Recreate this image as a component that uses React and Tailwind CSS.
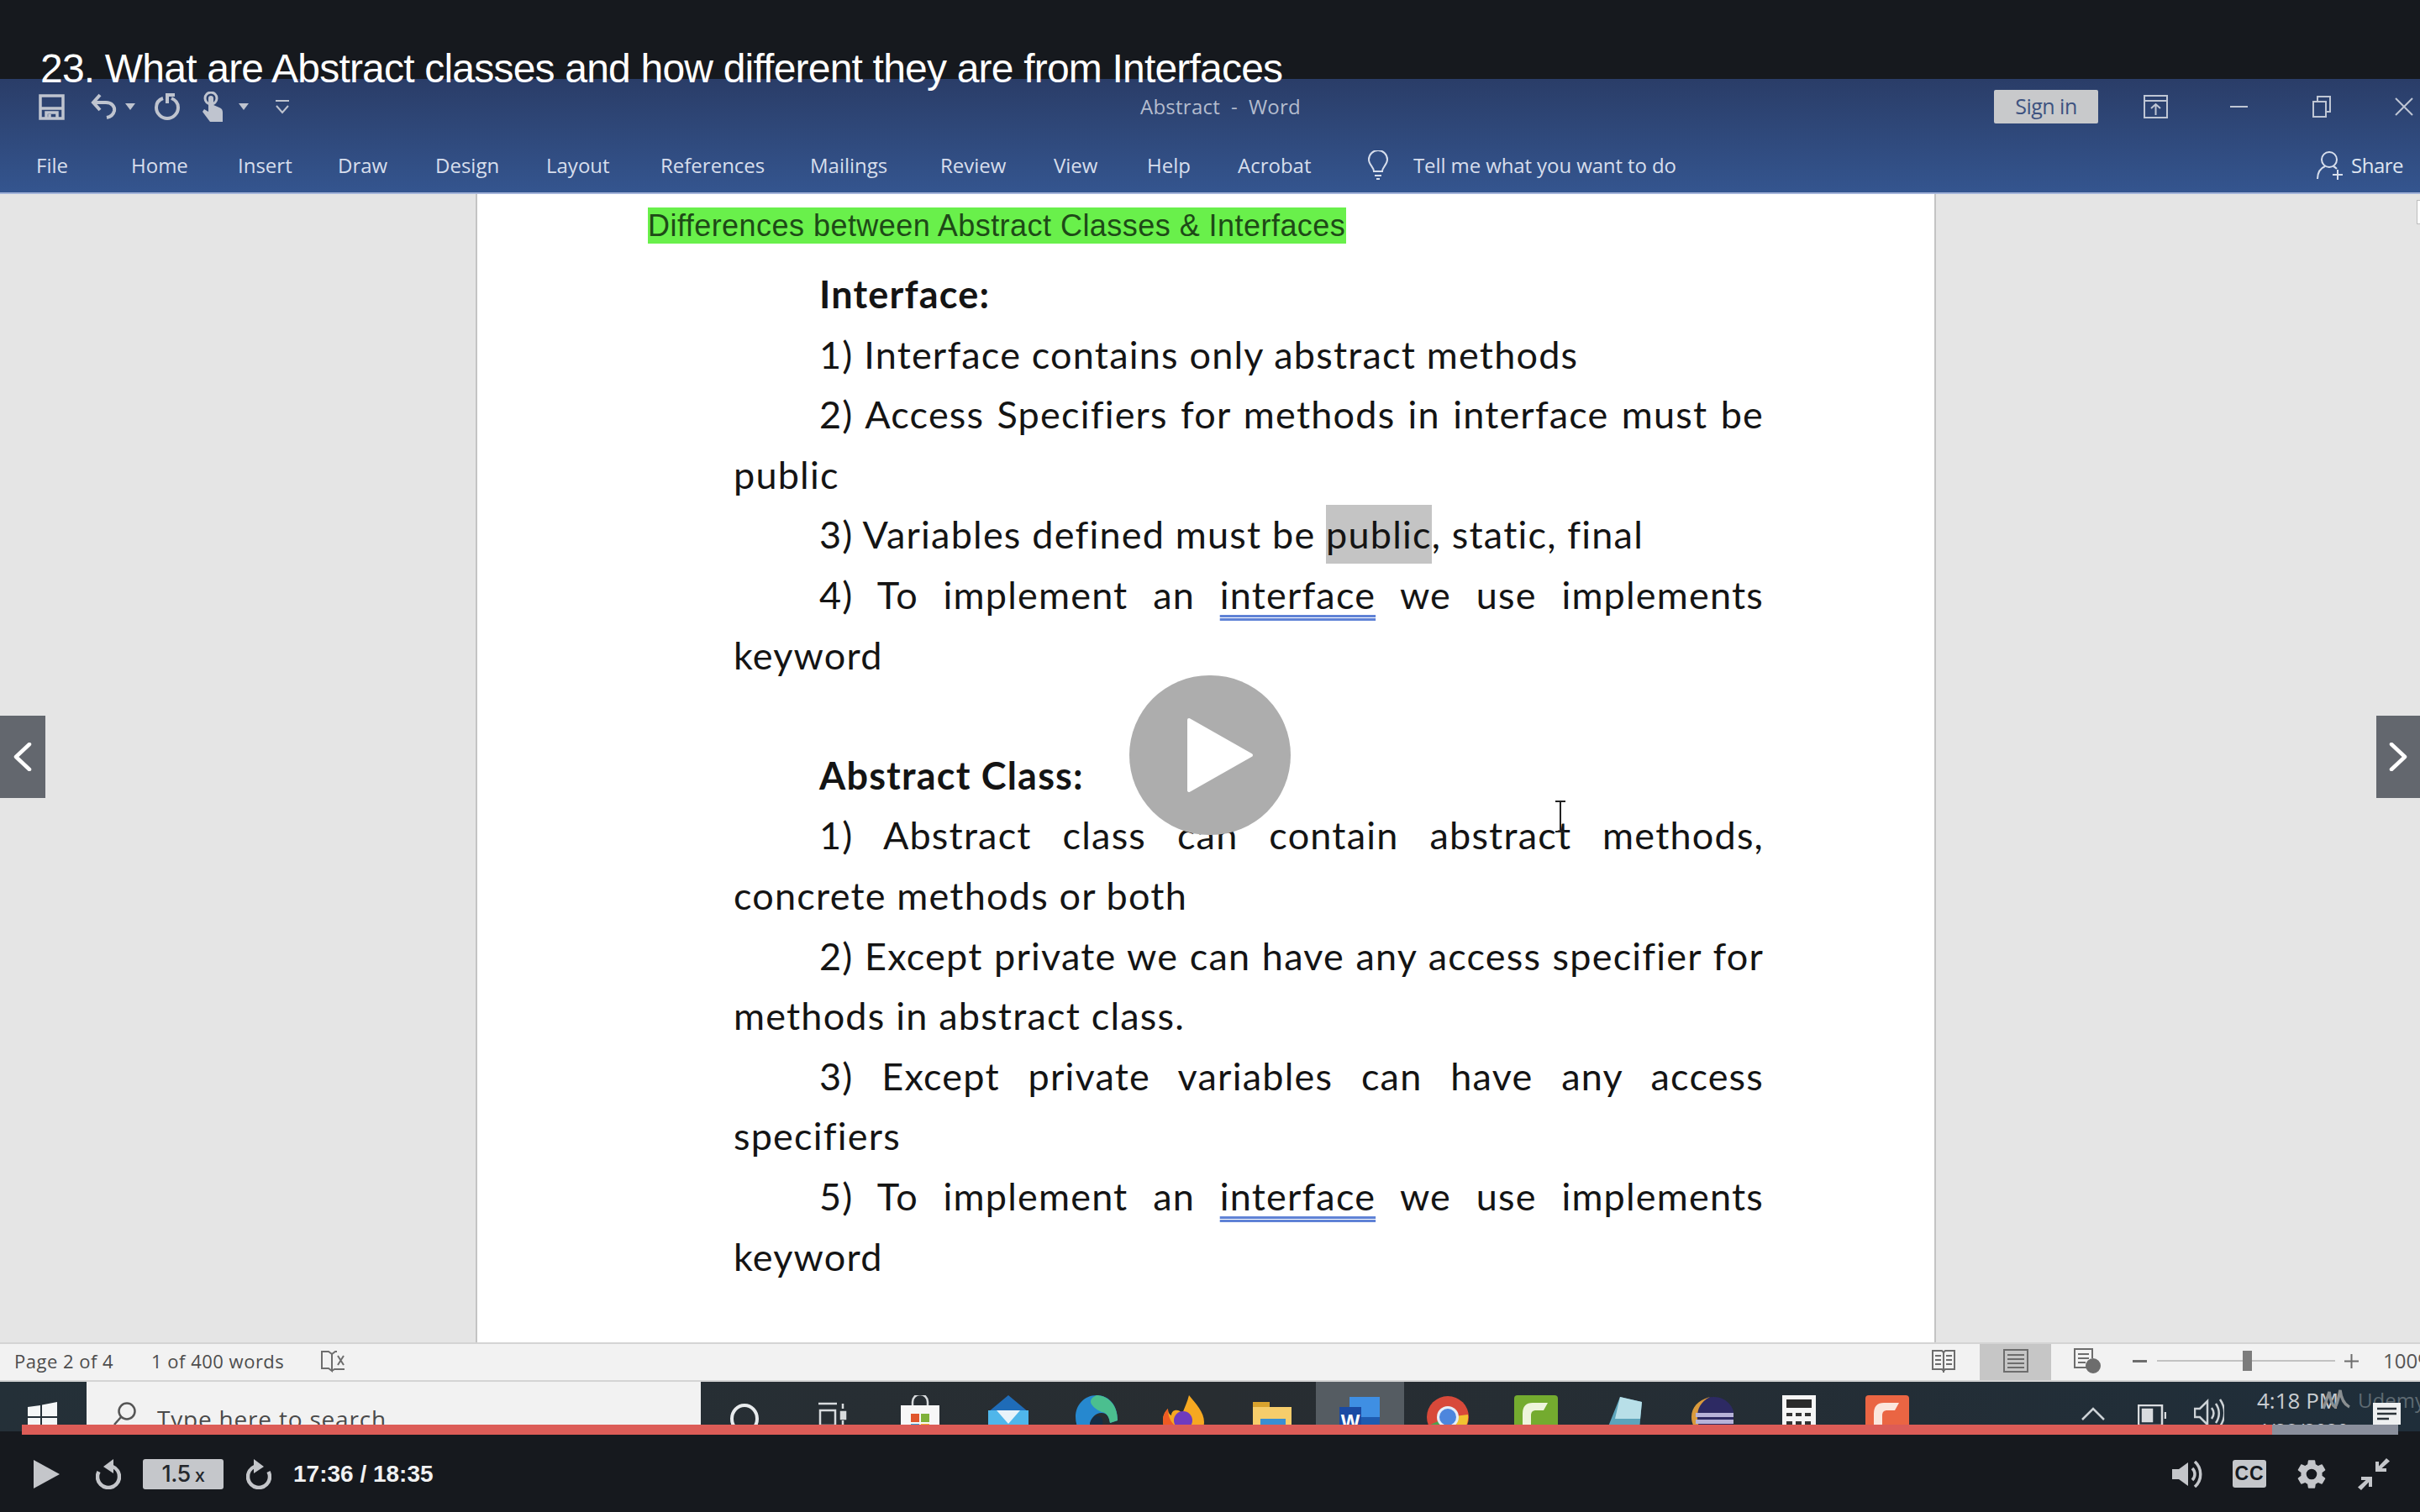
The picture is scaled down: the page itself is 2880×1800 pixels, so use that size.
import React from "react";

const Line = ({ children, indent, justify, bold }) => (
  <div
    className={[
      "h-[71.6px] leading-[71.6px] whitespace-nowrap",
      indent ? "pl-[102px]" : "",
      justify ? "text-justify [text-align-last:justify] whitespace-normal" : "",
      bold ? "font-bold" : "",
    ].join(" ")}
  >
    {children}
  </div>
);

const Squiggle = ({ children }) => (
  <span className="underline decoration-double decoration-[#5f82d6] decoration-[3px] underline-offset-[7px]">{children}</span>
);

const Tab = ({ w, children }) => (
  <div className={`${w} shrink-0`}>{children}</div>
);

const TaskSlot = ({ children, active }) => (
  <div className={`w-[104.6px] shrink-0 h-full flex justify-center pt-4 ${active ? "bg-[#555c62]" : ""}`}>
    <svg viewBox="0 0 52 52" className="w-[52px] h-[52px] shrink-0">{children}</svg>
  </div>
);

export default function App() {
  return (
    <div className="relative w-[2880px] h-[1800px] overflow-hidden flex flex-col bg-[#16191e] font-['Liberation_Sans',sans-serif]">
      {/* top band */}
      <div className="h-[94px] shrink-0 bg-[#16191e]" />

      {/* word header */}
      <div className="h-[137px] shrink-0 flex flex-col bg-gradient-to-b from-[#2a3d68] to-[#34558f] border-b-2 border-[#a3b3d9] font-['Open_Sans',sans-serif]">
        <div className="h-[66px] flex items-center relative">
          <div className="w-[1357px] shrink-0 pl-[46px] flex items-center text-[#bfc4cf]">
            <svg viewBox="0 0 31 31" className="w-[31px] h-[31px]" fill="none" stroke="currentColor" strokeWidth="3.500">
              <path d="M2 2h27v27H2z" />
              <path d="M2 16h27" strokeWidth="5" transform="translate(0 -9)" opacity="0" />
              <path d="M2 17h27" />
              <path d="M9 29v-7h13v7" />
              <path d="M13 24v4" />
            </svg>
            <svg viewBox="0 0 32 32" className="w-[32px] h-[32px] ml-[31px]" fill="none" stroke="currentColor" strokeWidth="4">
              <path d="M3 11h15c7 0 11 5 10 10-1 4-4 7-9 8" />
              <path d="M11 2 3 11l8 9" />
            </svg>
            <svg viewBox="0 0 12 8" className="w-[12px] h-[8px] ml-[9px]" fill="currentColor"><path d="M0 0h12L6 8z" /></svg>
            <svg viewBox="0 0 30 32" className="w-[30px] h-[32px] ml-[23px]" fill="none" stroke="currentColor" strokeWidth="4">
              <path d="M10 6C4 8 2 13 2 17c0 7 6 13 13 13s13-6 13-13c0-5-3-9-8-11" />
              <path d="M24 2h-9v10" />
            </svg>
            <svg viewBox="0 0 26 36" className="w-[26px] h-[36px] ml-[26px]" fill="currentColor">
              <circle cx="11" cy="8" r="7" fill="none" stroke="currentColor" strokeWidth="3" />
              <path d="M8 8a3 3 0 0 1 6 0v8l7 3c3 1 4 3 4 6v11H10L1 24l2-3 5 3z" />
            </svg>
            <svg viewBox="0 0 12 8" className="w-[12px] h-[8px] ml-[18px]" fill="currentColor"><path d="M0 0h12L6 8z" /></svg>
            <svg viewBox="0 0 18 18" className="w-[18px] h-[18px] ml-[31px]" fill="none" stroke="currentColor" strokeWidth="2">
              <path d="M1 2h16" />
              <path d="M2 8l7 8 7-8" />
            </svg>
          </div>
          <div className="text-[24px] text-[#b4bcce] tracking-[0.25px] w-[191px] shrink-0 whitespace-pre">Abstract  -  Word</div>
          <div className="flex-1" />
          <div className="w-[124px] h-[40px] shrink-0 rounded-[2px] bg-[#c8c9cb] text-[#3d5280] text-[25px] tracking-[-0.5px] flex items-center justify-center">Sign in</div>
          <div className="w-[383px] shrink-0 flex items-center text-[#bfc6d4]">
            <svg viewBox="0 0 29 28" className="w-[29px] h-[28px] ml-[54px]" fill="none" stroke="currentColor" strokeWidth="2">
              <path d="M1 1h27v26H1z" />
              <path d="M1 7h27" />
              <path d="M14.500 24V11M9 16l5.500-5 5.500 5" />
            </svg>
            <div className="w-[21px] h-[2px] bg-current ml-[74px]" />
            <svg viewBox="0 0 22 26" className="w-[22px] h-[26px] ml-[77px]" fill="none" stroke="currentColor" strokeWidth="2">
              <path d="M1 7h15v18H1z" />
              <path d="M6 7V1h15v18h-5" />
            </svg>
            <svg viewBox="0 0 22 22" className="w-[22px] h-[22px] ml-[76px]" fill="none" stroke="currentColor" strokeWidth="2">
              <path d="M1 1l20 20M21 1 1 21" />
            </svg>
          </div>
        </div>
        <div className="flex-1 flex items-center text-[#d7deec] text-[24px] tracking-[0px] pl-[43px] pt-[5px]">
          <Tab w="w-[113px]">File</Tab>
          <Tab w="w-[127px]">Home</Tab>
          <Tab w="w-[119px]">Insert</Tab>
          <Tab w="w-[116px]">Draw</Tab>
          <Tab w="w-[132px]">Design</Tab>
          <Tab w="w-[136px]">Layout</Tab>
          <Tab w="w-[178px]">References</Tab>
          <Tab w="w-[155px]">Mailings</Tab>
          <Tab w="w-[135px]">Review</Tab>
          <Tab w="w-[111px]">View</Tab>
          <Tab w="w-[108px]">Help</Tab>
          <Tab w="w-[154px]">Acrobat</Tab>
          <svg viewBox="0 0 26 36" className="w-[26px] h-[36px] shrink-0" fill="none" stroke="currentColor" strokeWidth="2">
            <path d="M8 25c0-5-6-8-6-14a11 11 0 0 1 22 0c0 6-6 9-6 14z" />
            <path d="M9 30h8M11 34h4" />
          </svg>
          <div className="ml-[29px] tracking-[-0.1px]">Tell me what you want to do</div>
          <div className="flex-1" />
          <svg viewBox="0 0 33 36" className="w-[33px] h-[36px] shrink-0" fill="none" stroke="currentColor" strokeWidth="2">
            <circle cx="15" cy="11" r="9" />
            <path d="M1 34c0-8 4-13 9-15M20 19c2 1 3 2 4 3" />
            <path d="M25 23v12M19 29h12" />
          </svg>
          <div className="ml-[8px] mr-[20px] text-[#dfe5f0] tracking-[-0.5px]">Share</div>
        </div>
      </div>

      {/* document area */}
      <div className="flex-1 min-h-0 flex bg-[#e5e5e5]">
        <div className="w-[566px] shrink-0" />
        <div className="w-[1738px] shrink-0 bg-white border-x-2 border-[#c4c4c4] overflow-hidden pt-[16px] pl-[203px]">
          <div className="w-[831px] h-[43px] bg-[#69f04b] text-[#1e4a17] text-[36px] leading-[43px] whitespace-nowrap tracking-[0.46px]">
            Differences between Abstract Classes &amp; Interfaces
          </div>
          <div className="mt-[25px] ml-[102px] w-[1226px] text-[#141414] text-[45px] font-['Lato',sans-serif] tracking-[1.2px]">
            <Line indent bold>Interface:</Line>
            <Line indent>1) Interface contains only abstract methods</Line>
            <Line indent justify>2) Access Specifiers for methods in interface must be</Line>
            <Line>public</Line>
            <Line indent>3) Variables defined must be <span className="inline-block h-[70px] leading-[70px] bg-[#c4c4c4]">public</span>, static, final</Line>
            <Line indent justify>4) To implement an <Squiggle>interface</Squiggle> we use implements</Line>
            <Line>keyword</Line>
            <Line>&nbsp;</Line>
            <Line indent bold>Abstract Class:</Line>
            <Line indent justify>1) Abstract class can contain abstract methods,</Line>
            <Line>concrete methods or both</Line>
            <Line indent justify>2) Except private we can have any access specifier for</Line>
            <Line>methods in abstract class.</Line>
            <Line indent justify>3) Except private variables can have any access</Line>
            <Line>specifiers</Line>
            <Line indent justify>5) To implement an <Squiggle>interface</Squiggle> we use implements</Line>
            <Line>keyword</Line>
          </div>
        </div>
        <div className="flex-1 flex justify-end pt-[7px]">
          <div className="w-[4px] h-[29px] bg-white border-l border-y border-[#bdbdbd]" />
        </div>
      </div>

      {/* status bar */}
      <div className="h-[47px] shrink-0 bg-[#f2f2f2] border-y-2 border-[#d4d4d4] flex items-center pb-[3px] text-[#4d4d4d] text-[22px] tracking-[0.5px] font-['Open_Sans',sans-serif] overflow-hidden">
        <div className="pl-[17px] w-[180px] shrink-0 whitespace-nowrap">Page 2 of 4</div>
        <div className="w-[201px] shrink-0 whitespace-nowrap">1 of 400 words</div>
        <svg viewBox="0 0 32 28" className="w-[32px] h-[28px] shrink-0" fill="none" stroke="#6d6d6d" strokeWidth="2">
          <path d="M2 3h8l4 3v20l-4-3H2z" />
          <path d="M14 6l4-3h2M14 26l3-2h12" />
          <path d="M21 8l7 11M28 8l-7 11" />
        </svg>
        <div className="flex-1" />
        <svg viewBox="0 0 28 30" className="w-[28px] h-[30px] shrink-0" fill="none" stroke="#6d6d6d" strokeWidth="2">
          <path d="M1 3h11l2 2 2-2h11v22H16l-2 2-2-2H1z" />
          <path d="M14 5v24M4 9h7M4 14h7M4 19h7M17 9h7M17 14h7M17 19h7" />
        </svg>
        <div className="w-[85px] h-[46px] bg-[#c6c6c6] ml-[29px] mt-[3px] shrink-0 flex items-center justify-center pb-[3px]">
          <svg viewBox="0 0 30 28" className="w-[30px] h-[28px]" fill="none" stroke="#6d6d6d" strokeWidth="2">
            <path d="M1 1h28v26H1z" />
            <path d="M5 7h20M5 12h20M5 17h20M5 22h20" />
          </svg>
        </div>
        <svg viewBox="0 0 32 30" className="w-[32px] h-[30px] ml-[27px] shrink-0" fill="none" stroke="#6d6d6d" strokeWidth="2">
          <path d="M17 23H1V1h21v11" />
          <path d="M5 7h13M5 12h13M5 17h9" />
          <circle cx="23" cy="21" r="8" fill="#6d6d6d" />
        </svg>
        <div className="w-[17px] h-[3px] bg-[#6d6d6d] ml-[38px] shrink-0" />
        <div className="w-[212px] h-[2px] bg-[#c2c2c2] ml-[12px] shrink-0 flex items-center">
          <div className="w-[11px] h-[24px] bg-[#7c7c7c] ml-[102px] shrink-0" />
        </div>
        <svg viewBox="0 0 17 17" className="w-[17px] h-[17px] ml-[11px] shrink-0" stroke="#6d6d6d" strokeWidth="2"><path d="M0 8.500h17M8.500 0v17" /></svg>
        <div className="w-[73px] pl-[29px] shrink-0 whitespace-nowrap text-[24px] text-[#555] tracking-[0px]">100%</div>
      </div>

      {/* taskbar */}
      <div className="h-[59px] shrink-0 flex overflow-hidden bg-gradient-to-r from-[#243038] via-[#282d31] to-[#1f2e3a] font-['Open_Sans',sans-serif]">
        <div className="w-[103px] shrink-0 pl-[33px] pt-[24px]">
          <svg viewBox="0 0 35 36" className="w-[35px] h-[36px]" fill="#f4f6f7">
            <path d="M0 6l15-2v13H0zM17 3.500 35 0v17H17zM0 19h15v13L0 30zM17 19h18v17l-18-3z" />
          </svg>
        </div>
        <div className="w-[731px] shrink-0 bg-[#f2f2f2] flex items-start pt-[24px] pl-[32px] text-[#4a4a4a] text-[28px] leading-[40px]">
          <svg viewBox="0 0 28 28" className="w-[28px] h-[28px] shrink-0" fill="none" stroke="#555" strokeWidth="2.500">
            <circle cx="16" cy="11" r="9.500" />
            <path d="M9 18 1 27" />
          </svg>
          <div className="ml-[24px] tracking-[0.8px] whitespace-nowrap">Type here to search</div>
        </div>
        <TaskSlot>
          <ellipse cx="26" cy="28" rx="15" ry="16" fill="none" stroke="#e8ebed" strokeWidth="4" />
        </TaskSlot>
        <TaskSlot>
          <g fill="none" stroke="#d8dbdd" strokeWidth="2.500">
            <path d="M9 10h22M9 42h22M11 18h18v18H11zM38 10v6M38 30v12" />
            <rect x="36" y="20" width="5" height="8" fill="#d8dbdd" />
          </g>
        </TaskSlot>
        <TaskSlot>
          <path d="M17 12V8a9 9 0 0 1 18 0v4" fill="none" stroke="#d8dbdd" strokeWidth="2.500" />
          <path d="M3 12h46v40H3z" fill="#f7f7f7" />
          <path d="M15 22h10v10H15z" fill="#e0562c" />
          <path d="M27 22h10v10H27z" fill="#7fb13a" />
          <path d="M15 34h10v10H15z" fill="#2d9fdc" />
          <path d="M27 34h10v10H27z" fill="#f0b42c" />
        </TaskSlot>
        <TaskSlot>
          <path d="M26 0 50 20H2z" fill="#1f6cb8" />
          <path d="M2 18h48v34H2z" fill="#4fb6ea" />
          <path d="M12 18h28L26 34z" fill="#e8f3fa" />
        </TaskSlot>
        <TaskSlot>
          <path d="M26 0C12 0 1 11 1 26c0 10 5 20 12 25l5-16c0-6 6-14 14-14 6 0 9 4 10 12l9-3C51 12 41 0 26 0z" fill="#2688cf" />
          <path d="M26 0c10 0 25 8 25 30l-9 3c-1-8-5-13-10-13C20 14 13 6 26 0z" fill="#4bbf8f" />
          <path d="M18 35c1-7 6-11 11-10 4 1 5 6 4 10l-6 12z" fill="#152d45" />
        </TaskSlot>
        <TaskSlot>
          <path d="M32 0c8 10 18 20 18 32S40 52 26 52 1 44 1 30c0-6 2-10 6-14 0 5 2 7 4 8 0-8 10-8 13-2 3-8 6-14 8-22z" fill="#f6a821" />
          <path d="M7 16c0 8 2 14 8 20l-3 14C5 46 1 38 1 30c0-6 2-10 6-14z" fill="#ee5a24" />
          <circle cx="25" cy="30" r="11" fill="#6f3bbf" />
        </TaskSlot>
        <TaskSlot>
          <path d="M3 8h20v6H3z" fill="#d9a32e" />
          <path d="M3 14h46v38H3z" fill="#f6cd6b" />
          <path d="M12 28h30v24H12z" fill="#3a8fd2" />
        </TaskSlot>
        <TaskSlot active>
          <path d="M14 2h36v46H14z" fill="#3f8fe3" />
          <path d="M28 26h22v24H28z" fill="#1e5bb0" />
          <path d="M2 14h26v34H2z" fill="#1a4aa3" />
          <text x="15" y="40" textAnchor="middle" fontSize="24" fontWeight="700" fill="#fff" fontFamily="'Liberation Sans',sans-serif">W</text>
        </TaskSlot>
        <TaskSlot>
          <circle cx="26" cy="26" r="25" fill="#d8493a" />
          <path d="M26 26 3 36a25 25 0 0 0 23 15z" fill="#4ca24e" />
          <path d="M26 26v25a25 25 0 0 0 24-28z" fill="#f1c230" />
          <circle cx="26" cy="26" r="13" fill="#e6eef8" />
          <circle cx="26" cy="26" r="10" fill="#4d86dd" />
        </TaskSlot>
        <TaskSlot>
          <rect x="0" y="0" width="52" height="52" rx="4" fill="#74ab2f" />
          <path d="M10 52V22C10 13 14 9 22 9h18l-5 9H26c-4 0-6 2-6 6v28z" fill="#eef4dc" />
        </TaskSlot>
        <TaskSlot>
          <path d="M22 2 48 8 44 52H2z" fill="#5da4bb" />
          <path d="M22 2 48 8l-2 20-30 0z" fill="#b8dfe8" />
        </TaskSlot>
        <TaskSlot>
          <circle cx="29" cy="26" r="24" fill="#2d2a63" />
          <path d="M24 2C10 6 2 14 2 26s8 20 22 24C13 44 9 36 9 26S13 8 24 2z" fill="#d99a3c" />
          <path d="M7 21h45v5H7zM7 29h45v5H7zM9 37h41v5H9z" fill="#b7b3d8" />
        </TaskSlot>
        <TaskSlot>
          <rect x="6" y="0" width="40" height="52" fill="#f5f5f5" />
          <rect x="11" y="5" width="30" height="10" fill="#2a2a2a" />
          <path d="M11 21h7v4h-7zM22 21h7v4h-7zM33 21h7v4h-7zM11 31h7v4h-7zM22 31h7v4h-7zM33 31h7v4h-7z" fill="#333" />
        </TaskSlot>
        <TaskSlot>
          <rect x="0" y="0" width="52" height="52" rx="4" fill="#ea6543" />
          <path d="M10 52V22C10 13 14 9 22 9h18l-5 9H26c-4 0-6 2-6 6v28z" fill="#fbe6dc" />
        </TaskSlot>
        <div className="flex-1" />
        <div className="w-[403px] shrink-0 flex items-start">
          <svg viewBox="0 0 28 16" className="w-[28px] h-[16px] mt-[30px] shrink-0" fill="none" stroke="#cdd2d6" strokeWidth="2.500">
            <path d="M1 15 14 2l13 13" />
          </svg>
          <svg viewBox="0 0 34 26" className="w-[34px] h-[26px] ml-[39px] mt-[27px] shrink-0" fill="none" stroke="#d9dcdf" strokeWidth="2.500">
            <path d="M1 1h28v24H1z" />
            <path d="M6 6h11v14H6z" fill="#d9dcdf" />
            <path d="M33 9v8" />
          </svg>
          <svg viewBox="0 0 36 38" className="w-[36px] h-[38px] ml-[33px] mt-[18px] shrink-0" fill="none" stroke="#cdd2d6" strokeWidth="2.500">
            <path d="M1 14h6l9-9v28l-9-9H1z" />
            <path d="M21 13c3 4 3 9 0 13M26 8c5 7 5 16 0 23M31 3c7 10 7 22 0 32" />
          </svg>
          <div className="ml-[39px] w-[77px] shrink-0 text-[#c8ccd0] text-[26px] leading-[32px] pt-[6px] whitespace-nowrap">
            <div>4:18 PM</div>
            <div className="text-[23px] mt-[4px]">4/28/2020</div>
          </div>
          <div className="relative shrink-0 mt-[6px] w-[115px] h-[53px]">
            <svg viewBox="0 0 36 30" className="w-[36px] h-[30px]" fill="none" stroke="#8a8f91" strokeWidth="3.500">
              <path d="M2 26c3-8 5-14 7-20 1 8 3 16 7 18 3-4 4-12 6-20 1 8 3 16 11 20" />
            </svg>
            <div className="absolute top-[1px] left-[43px] text-[24px] text-[#5e6a72] leading-[30px]">Udemy</div>
            <svg viewBox="0 0 36 34" className="absolute top-[19px] left-[61px] w-[36px] h-[34px]" fill="none">
              <path d="M0 0h33v26H20l-8 8v-8H0z" fill="#eef0f1" />
              <path d="M5 7h23M5 13h23M5 19h14" stroke="#2b3339" strokeWidth="2.500" />
            </svg>
          </div>
        </div>
      </div>

      {/* player controls */}
      <div className="relative h-[96px] shrink-0 bg-[#16191e] flex items-center text-[#c4c6ca] pt-[5px]">
        <div className="absolute left-[26px] top-[-8px] w-[2828px] h-[12px] flex">
          <div className="w-[2678px] bg-[#dc5c57]" />
          <div className="flex-1 bg-[#8a8f9c]" />
        </div>
        <svg viewBox="0 0 31 34" className="w-[31px] h-[34px] ml-[40px] shrink-0" fill="currentColor">
          <path d="M0 0 31 17 0 34z" />
        </svg>
        <svg viewBox="0 0 30 36" className="w-[30px] h-[36px] ml-[43px] shrink-0" fill="none" stroke="currentColor" strokeWidth="4.500">
          <path d="M20 9c5 2 8 7 8 12a13 13 0 0 1-26 0c0-2 .5-4 1.500-6" />
          <path d="M21 0v17l-12-8z" fill="currentColor" stroke="none" />
        </svg>
        <div className="w-[96px] h-[36px] ml-[26px] shrink-0 rounded-[3px] bg-[#c5c7cb] text-[#24272c] flex items-baseline justify-center text-[27px] leading-[36px] font-['Inter',sans-serif] font-medium tracking-[-0.5px]">
          1.5<span className="text-[22px] ml-[5px]">x</span>
        </div>
        <svg viewBox="0 0 30 36" className="w-[30px] h-[36px] ml-[27px] shrink-0 -scale-x-100" fill="none" stroke="currentColor" strokeWidth="4.500">
          <path d="M20 9c5 2 8 7 8 12a13 13 0 0 1-26 0c0-2 .5-4 1.500-6" />
          <path d="M21 0v17l-12-8z" fill="currentColor" stroke="none" />
        </svg>
        <div className="ml-[26px] text-[28px] font-bold text-[#f0f1f2] whitespace-nowrap">17:36 / 18:35</div>
        <div className="flex-1" />
        <svg viewBox="0 0 36 32" className="w-[36px] h-[32px] shrink-0" fill="currentColor">
          <path d="M0 10h8L19 2v28L8 22H0z" />
          <path d="M24 9c4 4 4 10 0 14" fill="none" stroke="currentColor" strokeWidth="3.500" />
          <path d="M27 1c9 8 9 22 0 30" fill="none" stroke="currentColor" strokeWidth="3.500" />
        </svg>
        <div className="w-[40px] h-[33px] ml-[36px] shrink-0 rounded-[3px] bg-[#c5c7cb] text-[#16191e] font-bold text-[23px] leading-[33px] text-center tracking-[1px]">CC</div>
        <svg viewBox="0 0 24 24" className="w-[42px] h-[42px] ml-[33px] shrink-0" fill="currentColor">
          <path d="M19.140 12.940c.04-.3.060-.61.060-.94 0-.32-.02-.64-.07-.94l2.030-1.580a.49.49 0 0 0 .12-.61l-1.920-3.320a.488.488 0 0 0-.59-.22l-2.390.96c-.5-.38-1.030-.7-1.620-.94l-.36-2.540a.484.484 0 0 0-.48-.41h-3.840c-.24 0-.43.17-.47.41l-.36 2.540c-.59.24-1.130.57-1.620.94l-2.390-.96c-.22-.08-.47 0-.59.22L2.740 8.870c-.12.21-.08.47.12.61l2.030 1.580c-.05.3-.09.63-.09.94s.02.64.07.94l-2.030 1.580a.49.49 0 0 0-.12.61l1.920 3.320c.12.22.37.29.59.22l2.390-.96c.5.38 1.030.7 1.620.94l.36 2.540c.05.24.24.41.48.41h3.840c.24 0 .44-.17.47-.41l.36-2.540c.59-.24 1.130-.56 1.620-.94l2.390.96c.22.08.47 0 .59-.22l1.920-3.320c.12-.22.07-.47-.12-.61l-2.010-1.580zM12 15.600A3.600 3.600 0 1 1 12 8.400a3.600 3.600 0 0 1 0 7.200z" />
        </svg>
        <svg viewBox="0 0 40 38" className="w-[40px] h-[38px] ml-[33px] mr-[35px] shrink-0" fill="currentColor">
          <path d="M22 16V4h4v5.500L35 0l4 3.500-9.500 8.500H35v4z" />
          <path d="M18 22v12h-4v-5.500L5 38l-4-3.500L10.500 26H5v-4z" />
        </svg>
      </div>

      {/* overlays */}
      <div className="absolute left-[48px] top-[52px] text-[48px] leading-[60px] tracking-[-0.8px] text-white whitespace-nowrap">
        23. What are Abstract classes and how different they are from Interfaces
      </div>
      <div className="absolute left-0 top-[852px] w-[54px] h-[98px] bg-[#63676e] flex items-center justify-center">
        <svg viewBox="0 0 22 34" className="w-[22px] h-[34px]" fill="none" stroke="white" strokeWidth="4.500" strokeLinecap="round" strokeLinejoin="round"><path d="M19 2 3 17l16 15" /></svg>
      </div>
      <div className="absolute right-0 top-[852px] w-[52px] h-[98px] bg-[#63676e] flex items-center justify-center">
        <svg viewBox="0 0 22 34" className="w-[22px] h-[34px]" fill="none" stroke="white" strokeWidth="4.500" strokeLinecap="round" strokeLinejoin="round"><path d="M3 2l16 15L3 32" /></svg>
      </div>
      <div className="absolute left-[1344px] top-[804px] w-[192px] h-[190px] rounded-full bg-[#adadad] flex items-center justify-center">
        <svg viewBox="0 0 80 90" className="w-[80px] h-[90px] ml-[24px]" fill="white" stroke="white" strokeWidth="4" strokeLinejoin="round"><path d="M3 3 77 45 3 87z" /></svg>
      </div>
      <svg viewBox="0 0 14 38" className="absolute left-[1850px] top-[953px] w-[14px] h-[38px]" fill="none" stroke="#222" strokeWidth="2">
        <path d="M1 1h12M7 1v36M1 37h12" />
      </svg>
    </div>
  );
}
